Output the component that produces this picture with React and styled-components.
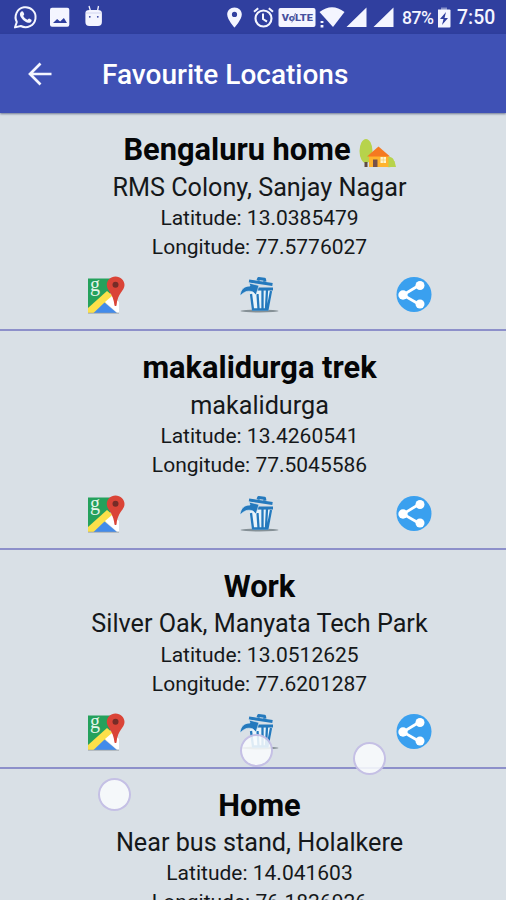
import React from "react";
import styled, { createGlobalStyle } from "styled-components";

const GlobalStyle = createGlobalStyle`
  * { box-sizing: border-box; }
  html, body { margin: 0; height: 900px; overflow: hidden; }
  body { font-family: Roboto, "Noto Sans", sans-serif; background: #d9e0e6; }
`;

const Screen = styled.div`
  position: relative;
  width: 506px;
  height: 900px;
  overflow: hidden;
  background: #d9e0e6;
`;

const StatusBar = styled.div`
  display: flex;
  justify-content: space-between;
  height: 34px;
  background: #303f9f;
  color: #f4f5ff;
`;

const StatusIcons = styled.svg`
  flex: none;
  display: block;
  height: 34px;
  width: ${(p) => p.$width}px;
`;

const StatusRight = styled.div`
  display: flex;
  align-items: center;
  padding-right: 10px;
`;

const BatteryLevel = styled.span`
  width: 36px;
  font-size: 17.6px;
  font-weight: 500;
  letter-spacing: -0.55px;
  line-height: 34px;
  padding-top: 2px;
  white-space: nowrap;
`;

const Clock = styled.span`
  width: 39px;
  margin-left: 5px;
  font-size: 19.4px;
  font-weight: 500;
  line-height: 34px;
  padding-top: 2px;
  white-space: nowrap;
`;

const AppBar = styled.header`
  position: relative;
  display: flex;
  align-items: center;
  height: 79px;
  padding: 0 28px;
  gap: 50px;
  background: #3f51b5;
  box-shadow: 0 1px 2px rgba(40, 50, 90, 0.6);
`;

const BackIcon = styled.svg`
  flex: none;
  display: block;
  width: 24px;
  height: 24px;
`;

const BarTitle = styled.h1`
  margin: 2px 0 0;
  color: #fff;
  font-size: 28px;
  font-weight: 500;
  line-height: 32px;
  white-space: nowrap;
`;

const Card = styled.article`
  display: flex;
  flex-direction: column;
  height: 218.67px;
  padding-top: 18px;
  border-bottom: 2px solid #8d90ca;
  color: #15181a;

  &:first-child {
    height: 218.2px;
  }
`;

const TextBlock = styled.div`
  display: flex;
  flex-direction: column;
  align-items: center;
  padding-left: 13px;
  white-space: nowrap;
`;

const Name = styled.h2`
  display: flex;
  align-items: center;
  margin: 0;
  height: 37px;
  font-size: 30.8px;
  font-weight: 700;
  line-height: 37px;
  color: #050607;
`;

const Address = styled.p`
  margin: 0.6px 0 0;
  height: 35.4px;
  font-size: 25.2px;
  line-height: 37px;
`;

const Coordinate = styled.p`
  margin: 0;
  height: 28.7px;
  font-size: 21px;
  line-height: 29px;
`;

const Actions = styled.div`
  display: flex;
  justify-content: space-between;
  padding: 13px 72px 0 85px;
`;

const ActionIcon = styled.svg`
  display: block;
  width: 42px;
  height: 42px;
`;

const HouseIcon = styled.svg`
  width: 37px;
  height: 32px;
  margin: 9px 0 0 8px;
`;

const MapLetter = styled.text`
  font-family: "Liberation Serif", serif;
  font-size: 20px;
  fill: #e4f4e9;
`;

const TouchDot = styled.span`
  position: absolute;
  left: ${(p) => p.$x - 16.5}px;
  top: ${(p) => p.$y - 16.5}px;
  width: 33px;
  height: 33px;
  border: 2px solid rgba(187, 181, 224, 0.85);
  border-radius: 50%;
  background: rgba(249, 251, 253, 0.87);
`;

const LeftStatus = () => (
  <StatusIcons $width={120} viewBox="0 0 120 34" fill="none">
    <path d="M16.8 22A10 10 0 1 1 20.8 26L15 27.4Z" stroke="#f4f5ff" strokeWidth="2" strokeLinejoin="round" />
    <path d="M21 11.8c.7-.8 1.8-.8 2.3.3l.9 2c.2.5-.8 1.3-.9 1.8.9 1.8 2.2 3 4.1 3.8.7 0 1.2-1.3 1.8-1.1l2.2 1.1c.6.3 0 2.1-.7 2.6-1.4 1.1-3.8.3-5.9-1.1-2.5-1.7-4.3-4-4.8-6-.3-1.3.2-2.6 1-3.4z" fill="#f4f5ff" />
    <rect x="50" y="7.7" width="19.3" height="19" rx="2" fill="#f4f5ff" />
    <path d="M53 23l4.1-4 3 2.500 3.800-3.500L67 23z" fill="#303f9f" />
    <path d="M89 6l1.500 5M98.500 6l-1 5" stroke="#f4f5ff" strokeWidth="1.300" />
    <path d="M85.400 13q0-3 4-3h8.500q4 0 4 3v9q0 4-4 4h-8.500q-4 0-4-4z" fill="#f4f5ff" />
    <path d="M86 13h15.400" stroke="#c9cdec" strokeWidth=".8" />
    <circle cx="89.800" cy="16.800" r=".9" fill="#303f9f" />
    <circle cx="97.800" cy="16.800" r=".9" fill="#303f9f" />
  </StatusIcons>
);

const VoLteText = styled.text`
  font-family: Roboto, sans-serif;
  font-size: 9.5px;
  font-weight: 900;
  fill: #46519e;
`;

const RightStatus = () => (
  <StatusIcons $width={177} viewBox="225 0 177 34" fill="none">
    <path fillRule="evenodd" d="M234.500 7.500c-4.200 0-7.300 3-7.300 7 0 5 7.300 13 7.300 13s7.300-8 7.300-13c0-4-3.100-7-7.300-7zm0 4.300a2.600 2.600 0 1 1 0 5.200 2.600 2.600 0 0 1 0-5.200z" fill="#f4f5ff" />
    <circle cx="263.500" cy="18.500" r="8" stroke="#f4f5ff" strokeWidth="2.100" />
    <path d="M263 13.500v5.500l4 2.700M254 11.800l4.200-3.600M273 11.800l-4.200-3.600" stroke="#f4f5ff" strokeWidth="2" />
    <rect x="278.500" y="8" width="37" height="19" rx="2" fill="#f4f5ff" />
    <VoLteText x="281.800" y="21" textLength="31" lengthAdjust="spacingAndGlyphs">VoLTE</VoLteText>
    <path d="M291.800 22.500l3.700-9.500" stroke="#6870ae" strokeWidth=".9" />
    <path d="M319.500 12q12.500-9.500 25 0L333 27z" fill="#f4f5ff" />
    <path d="M322 21v2M322 25v2.500" stroke="#f4f5ff" strokeWidth="2.800" />
    <path d="M346.500 27L366.500 7.500V27zM373.500 27L393.500 7.500V27z" fill="#f4f5ff" />
  </StatusIcons>
);

const BatteryIcon = () => (
  <StatusIcons $width={14} viewBox="438 0 14 34">
    <path d="M441 7.500h6v3h-6z" fill="#8790c8" />
    <path d="M437.500 10.500q0-1 1-1h11q1 0 1 1v16q0 1-1 1h-11q-1 0-1-1z" fill="#f4f5ff" />
    <path d="M446 12l-6 7h3.500l-1.500 6 6-7h-3.500z" fill="#303f9f" />
  </StatusIcons>
);

const House = () => (
  <HouseIcon viewBox="0 0 37 32">
    <ellipse cx="7" cy="13" rx="6.500" ry="12" fill="#b7d34b" />
    <circle cx="30" cy="24" r="5.200" fill="#b7d34b" />
    <path d="M29 29v-6h6.500l1.500 6z" fill="#b7d34b" />
    <path d="M10 17.500L19.500 11 29.500 17.500V29H10z" fill="#ffb32d" />
    <path d="M8 18.500L19.500 8.500 31 18.500z" fill="#f57921" />
    <path d="M14 21.500h4.500V29H14z" fill="#75504b" />
    <path d="M21.500 19h5.500v6h-5.500z" fill="#fff6cf" />
    <path d="M24.300 19v6M21.500 22h5.500" stroke="#edc668" strokeWidth=".6" />
    <path d="M5.500 24h3V29h-3z" fill="#5f4a43" />
  </HouseIcon>
);

const MapIcon = () => (
  <ActionIcon viewBox="0 0 42 42">
    <path d="M3.500 5.500h29.500v33H3.500z" fill="#d8dde0" />
    <path d="M3 4.500h26v12L3 38z" fill="#25a15c" />
    <path d="M3 34L22 17l7 6L9.500 39H3z" fill="#fce04a" />
    <path d="M8.500 39L19.500 28.500 32 39z" fill="#438bea" />
    <path d="M20 28l7-6 7 6v10.500h-2z" fill="#fff" />
    <path d="M3 39.200h31" stroke="#959da3" strokeWidth=".8" />
    <MapLetter x="5" y="17">g</MapLetter>
    <path d="M30.500 2.500c-5 0-8.700 3.700-8.700 8.500 0 6 6.500 8 7.700 20.500q1 1 2 0C32.500 19 39.500 17 39.500 11c0-4.800-4-8.500-9-8.500z" fill="#da4437" />
    <circle cx="30.500" cy="10.700" r="3" fill="#762c27" />
  </ActionIcon>
);

const TrashIcon = () => (
  <ActionIcon viewBox="0 0 42 42">
    <ellipse cx="20.500" cy="37" rx="19" ry="1.500" fill="#859096" />
    <path d="M11 17h22l-3.500 19.500H13z" fill="#e9f4fa" />
    <path d="M12 20l2 15.500h14.500L32 17M18.500 20l1 14.500M23.500 16v18.500M28 16l-1 18.500" fill="none" stroke="#2479bd" strokeWidth="2.300" />
    <path d="M10 7l23.500 3.500M19 6.500l.7-2 5.800.8.500 2.500" fill="none" stroke="#2479bd" strokeWidth="3" strokeLinejoin="round" />
    <path d="M17 13.500h17v3H17z" fill="#2479bd" />
    <path d="M1 22c.5-6.500 4-10 10-10l-1-3 10 2.500-3 9.500-3-3C8.500 16 5 18 1 22z" fill="#2479bd" stroke="#d9e8f2" strokeWidth=".7" />
  </ActionIcon>
);

const ShareIcon = () => (
  <ActionIcon viewBox="0 0 42 42">
    <circle cx="22" cy="20.500" r="17.500" fill="#3aa0ef" />
    <path d="M27.500 11L11 21l16.500 9.500" fill="none" stroke="#fff" strokeWidth="2.700" />
    <circle cx="28" cy="11.500" r="4.500" fill="#fff" />
    <circle cx="11" cy="21" r="4.700" fill="#fff" />
    <circle cx="28" cy="30" r="4.500" fill="#fff" />
  </ActionIcon>
);

const places = [
  { name: "Bengaluru home", address: "RMS Colony, Sanjay Nagar", lat: "13.0385479", lon: "77.5776027", house: true },
  { name: "makalidurga trek", address: "makalidurga", lat: "13.4260541", lon: "77.5045586" },
  { name: "Work", address: "Silver Oak, Manyata Tech Park", lat: "13.0512625", lon: "77.6201287" },
  { name: "Home", address: "Near bus stand, Holalkere", lat: "14.041603", lon: "76.1826926" },
];

const touches = [
  { x: 256, y: 750 },
  { x: 369.5, y: 758.5 },
  { x: 114, y: 794.5 },
];

export default function App() {
  return (
    <Screen>
      <GlobalStyle />
      <StatusBar>
        <LeftStatus />
        <StatusRight>
          <RightStatus />
          <BatteryLevel>87%</BatteryLevel>
          <BatteryIcon />
          <Clock>7:50</Clock>
        </StatusRight>
      </StatusBar>
      <AppBar>
        <BackIcon viewBox="0 0 24 24" fill="none" stroke="#f4f5ff" strokeWidth="2.700">
          <path d="M23.500 12H2.500M12.500 1.500L2 12l10.500 10.500" />
        </BackIcon>
        <BarTitle>Favourite Locations</BarTitle>
      </AppBar>
      <main>
        {places.map((place) => (
          <Card key={place.name}>
            <TextBlock>
              <Name>
                {place.name}
                {place.house && <House />}
              </Name>
              <Address>{place.address}</Address>
              <Coordinate>Latitude: {place.lat}</Coordinate>
              <Coordinate>Longitude: {place.lon}</Coordinate>
            </TextBlock>
            <Actions>
              <MapIcon />
              <TrashIcon />
              <ShareIcon />
            </Actions>
          </Card>
        ))}
      </main>
      {touches.map((t) => (
        <TouchDot key={t.x} $x={t.x} $y={t.y} />
      ))}
    </Screen>
  );
}
